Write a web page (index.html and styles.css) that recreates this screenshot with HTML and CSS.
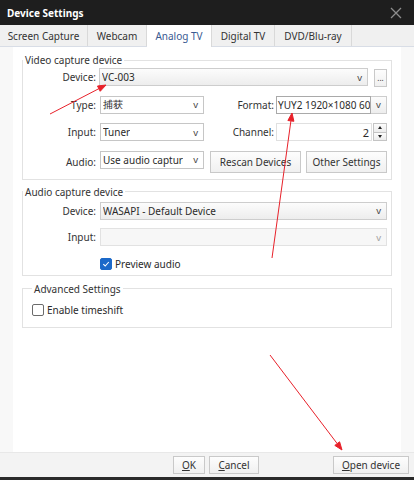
FILE: index.html
```html
<!DOCTYPE html>
<html>
<head>
<meta charset="utf-8">
<title>Device Settings</title>
<link rel="stylesheet" href="styles.css">
</head>
<body>
<div class="window">
  <div class="titlebar">
    <span class="title">Device Settings</span>
    <svg class="close" width="12" height="12" viewBox="0 0 12 12"><path d="M1 1 L11 11 M11 1 L1 11" stroke="#8c8c8c" stroke-width="1.3" fill="none"/></svg>
  </div>
  <div class="tabs">
    <div class="tab t1">Screen Capture</div>
    <div class="tab t2">Webcam</div>
    <div class="tab t3 active">Analog TV</div>
    <div class="tab t4">Digital TV</div>
    <div class="tab t5">DVD/Blu-ray</div>
    <div class="tab-fill"></div>
  </div>
  <div class="main">
    <div class="panel">
      <fieldset class="group g1">
        <legend>Video capture device</legend>
        <div class="grid4">
          <div class="lbl">Device:</div>
          <div class="span3 devrow">
            <div class="combo grad grow"><span class="ctext">VC-003</span><span class="arr">v</span></div>
            <div class="btn dots">...</div>
          </div>

          <div class="lbl">Type:</div>
          <div class="combo white"><span class="ctext">捕获</span><span class="arr">v</span></div>
          <div class="lbl lbl2">Format:</div>
          <div class="fmt"><span class="fmttext">YUY2 1920×1080 60.</span><span class="fmtarr">v</span></div>

          <div class="lbl">Input:</div>
          <div class="combo white"><span class="ctext">Tuner</span><span class="arr">v</span></div>
          <div class="lbl lbl2">Channel:</div>
          <div class="spin"><span class="spintext">2</span><span class="spinbtns"><span class="sb up"></span><span class="sb down"></span></span></div>

          <div class="lbl">Audio:</div>
          <div class="combo white"><span class="ctext clip">Use audio capture device</span><span class="arr">v</span></div>
          <div class="span2 btnrow">
            <div class="btn rescan">Rescan Devices</div>
            <div class="btn other">Other Settings</div>
          </div>
        </div>
      </fieldset>

      <fieldset class="group g2">
        <legend>Audio capture device</legend>
        <div class="grid2">
          <div class="lbl">Device:</div>
          <div class="combo grad"><span class="ctext">WASAPI - Default Device</span><span class="arr">v</span></div>
          <div class="lbl">Input:</div>
          <div class="combo disabled"><span class="ctext"></span><span class="arr">v</span></div>
          <div></div>
          <div class="check-row"><span class="cb checked"><svg width="8" height="8" viewBox="0 0 8 8"><path d="M1.3 4.2 L3.2 6 L6.8 2" stroke="#fff" stroke-width="1.1" fill="none"/></svg></span><span>Preview audio</span></div>
        </div>
      </fieldset>

      <fieldset class="group g3">
        <legend>Advanced Settings</legend>
        <div class="check-row"><span class="cb"></span><span>Enable timeshift</span></div>
      </fieldset>
    </div>
  </div>
  <div class="bottombar">
    <div class="btn bb ok"><u>O</u>K</div>
    <div class="btn bb cancel"><u>C</u>ancel</div>
    <div class="btn bb open"><u>O</u>pen device</div>
  </div>

  <svg class="arrows" width="414" height="480" viewBox="0 0 414 480">
    <g stroke="#e8212a" stroke-width="1" fill="#e8212a">
      <line x1="50" y1="114" x2="99" y2="88.6"/>
      <polygon points="106,85 100.2,91.3 97.5,86"/>
      <line x1="272" y1="258" x2="290.9" y2="121"/>
      <polygon points="292,113 293.9,121.3 287.9,120.5"/>
      <line x1="270" y1="355" x2="337.2" y2="443.6"/>
      <polygon points="342,450 334.8,445.4 339.6,441.8"/>
    </g>
  </svg>
</div>
</body>
</html>
```
FILE: styles.css
```css
* { box-sizing: border-box; }
body {
  margin: 0;
  font-family: "Noto Sans", "Open Sans", sans-serif;
  font-size: 10px;
  color: #2b2b2b;
}
.window {
  width: 414px;
  height: 480px;
  display: flex;
  flex-direction: column;
  background: #f8f8f8;
  position: relative;
  overflow: hidden;
}
.titlebar {
  height: 25px;
  flex: none;
  background: #1e1e1e;
  color: #fff;
  display: flex;
  align-items: center;
  justify-content: space-between;
  padding: 0 12px 0 7px;
  font-weight: bold;
  font-size: 10px;
}
.tabs {
  height: 22px;
  flex: none;
  display: flex;
  background: #f0f0f0;
  border-bottom: 1px solid #d8dde6;
}
.tab {
  display: flex;
  align-items: center;
  justify-content: center;
  border-right: 1px solid #d9d9d9;
  color: #333;
}
.t1 { width: 88px; }
.t2 { width: 59px; }
.t3 { width: 65px; }
.t4 { width: 63px; }
.t5 { width: 77px; }
.tab.active {
  background: #fff;
  color: #3a5a92;
  height: 22px;
}
.tab-fill { flex: 1; }
.main {
  flex: 1;
  display: flex;
  padding: 0 13px;
  min-height: 0;
}
.panel {
  flex: 1;
  background: #fff;
  padding: 6px 9px 0;
}
.group {
  margin: 0;
  border: 1px solid #e2e2e2;
  min-width: 0;
}
.group legend {
  padding: 0 2px;
  line-height: 14px;
  color: #333;
}
.g1 { padding: 1px 4px 6px 0; margin-bottom: 5px; }
.g2 { padding: 3px 4px 2px 0; margin-bottom: 6px; }
.g3 { padding: 5px 4px 8px 9px; }

.grid4 {
  display: grid;
  grid-template-columns: 77px 104px 72px 111px;
  grid-template-rows: 18px 18px 18px 22px;
  row-gap: 9.5px;
}
.grid2 {
  display: grid;
  grid-template-columns: 77px 1fr;
  grid-auto-rows: 18px;
  row-gap: 8.5px;
}
.lbl {
  display: flex;
  align-items: center;
  justify-content: flex-end;
  padding-right: 4px;
  color: #333;
}
.lbl2 { padding-right: 2px; }
.span3 { grid-column: 2 / 5; }
.span2 { grid-column: 3 / 5; }
.devrow {
  display: flex;
  gap: 6px;
  margin-left: -1px;
}
.grow { flex: 1; }
.combo {
  height: 18px;
  border: 1px solid #c9c9c9;
  display: flex;
  align-items: center;
  justify-content: space-between;
  padding: 0 5px 0 2px;
  overflow: hidden;
  white-space: nowrap;
}
.combo.grad { background: linear-gradient(#fcfcfc, #ededed); border-color: #cdcdcd; }
.combo.white { background: #fff; border-color: #c6c6c6; }
.combo.disabled { background: #f7f7f7; border-color: #e2e2e2; }
.combo.disabled .arr { color: #a0a0a0; }
.ctext { overflow: hidden; white-space: nowrap; }
.clip { width: 80px; flex: none; }
.arr { color: #444; font-size: 9.5px; flex: none; }
.dots {
  width: 13px;
  height: 18px;
  margin-top: 1px;
  padding: 0;
  align-items: flex-end;
  font-size: 8px;
  line-height: 12px;
}
.fmt {
  display: flex;
  height: 18px;
}
.fmttext {
  width: 95px;
  border: 1px solid #a9a9a9;
  background: #fff;
  padding-left: 1px;
  overflow: hidden;
  white-space: nowrap;
  display: flex;
  align-items: center;
}
.fmtarr {
  flex: 1;
  border: 1px solid #cdcdcd;
  border-left: none;
  background: linear-gradient(#fcfcfc, #ededed);
  display: flex;
  align-items: center;
  justify-content: center;
  font-size: 9.5px;
  color: #444;
}
.spin {
  display: flex;
  height: 18px;
}
.spintext {
  width: 96px;
  border: 1px solid #e0e0e0;
  background: #fff;
  display: flex;
  align-items: center;
  justify-content: flex-end;
  padding-right: 2px;
  font-size: 11px;
}
.spinbtns {
  width: 14px;
  display: flex;
  flex-direction: column;
  margin-left: 1px;
}
.sb {
  flex: 1;
  border: 1px solid #c4c4c4;
  background: linear-gradient(#fcfcfc, #ececec);
  position: relative;
}
.sb.down { border-top: none; }
.sb::after {
  content: "";
  position: absolute;
  left: 4px;
  top: 2px;
  border-left: 2.5px solid transparent;
  border-right: 2.5px solid transparent;
}
.sb.up::after { border-bottom: 3px solid #222; }
.sb.down::after { border-top: 3px solid #222; top: 2px; }
.btnrow {
  display: flex;
  gap: 5px;
  padding-left: 6px;
}
.btn {
  display: flex;
  align-items: center;
  justify-content: center;
  border: 1px solid #c9c9c9;
  background: linear-gradient(#fdfdfd, #f0f0f0);
  color: #333;
  white-space: nowrap;
}
.rescan { width: 91px; height: 22px; }
.other { width: 81px; height: 22px; }
.check-row {
  display: flex;
  align-items: center;
  gap: 3px;
  height: 18px;
}
.cb {
  width: 12px;
  height: 12px;
  border: 1px solid #6b6b6b;
  border-radius: 2px;
  background: #fff;
  display: flex;
  align-items: center;
  justify-content: center;
}
.cb.checked {
  background: #1c69c9;
  border-color: #1c69c9;
}
.bottombar {
  height: 28px;
  flex: none;
  background: #f3f3f3;
  border-top: 1px solid #e8e8e8;
  border-bottom: 3px solid #2a2a2a;
  display: flex;
  align-items: center;
  justify-content: flex-end;
  padding-right: 5px;
}
.bb { height: 18px; }
.ok { width: 32px; }
.cancel { width: 50px; margin-left: 4px; }
.open { width: 76px; margin-left: 74px; }
.arrows {
  position: absolute;
  left: 0;
  top: 0;
  pointer-events: none;
}
```
